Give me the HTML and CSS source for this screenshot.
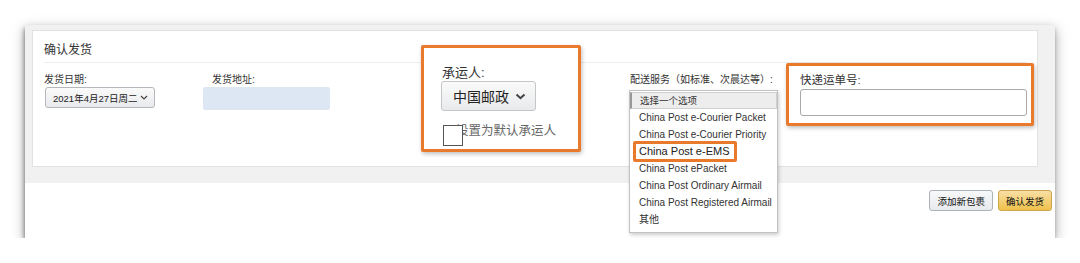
FILE: index.html
```html
<!DOCTYPE html>
<html lang="zh-CN">
<head>
    <meta charset="UTF-8">
    <title>确认发货</title>
    <link rel="stylesheet" href="styles.css">
</head>
<body>
    <div class="window">
        <div class="upper">
            <div class="panel">
                <h2 class="title">确认发货</h2>
                <div class="fields">
                    <div class="field date-field">
                        <label>发货日期:</label>
                        <div class="select date-select">
                            <span>2021年4月27日周二</span>
                            <svg class="chevron" width="8" height="5" viewBox="0 0 8 5"><path d="M1 1 L4 4 L7 1" fill="none" stroke="#444" stroke-width="1.2"/></svg>
                        </div>
                    </div>

                    <div class="field address-field">
                        <label>发货地址:</label>
                        <div class="address-box"></div>
                    </div>

                    <div class="field carrier-field mark">
                        <label>承运人:</label>
                        <div class="select carrier-select">
                            <span>中国邮政</span>
                            <svg class="chevron" width="11" height="7" viewBox="0 0 11 7"><path d="M1.5 1.5 L5.5 5.2 L9.5 1.5" fill="none" stroke="#444" stroke-width="2"/></svg>
                        </div>
                        <div class="default-row">
                            <span class="checkbox"></span>
                            <span class="default-text">设置为默认承运人</span>
                        </div>
                    </div>

                    <div class="field service-field">
                        <label>配送服务（如标准、次晨达等）:</label>
                        <ul class="options">
                            <li class="current">选择一个选项</li>
                            <li>China Post e-Courier Packet</li>
                            <li>China Post e-Courier Priority</li>
                            <li class="picked"><span>China Post e-EMS</span></li>
                            <li>China Post ePacket</li>
                            <li>China Post Ordinary Airmail</li>
                            <li>China Post Registered Airmail</li>
                            <li>其他</li>
                        </ul>
                    </div>

                    <div class="field tracking-field mark">
                        <label>快递运单号:</label>
                        <div class="text-input"></div>
                    </div>
                </div>
            </div>
        </div>
        <div class="footer">
            <button class="btn">添加新包裹</button>
            <button class="btn btn-primary">确认发货</button>
        </div>
    </div>
</body>
</html>
```

FILE: styles.css
```css
body {
    margin: 0;
    background-color: #ffffff;
    font-family: 'Liberation Sans', 'Noto Sans CJK SC', sans-serif;
    color: #333;
}
.window {
    margin: 25px 0 0 25px;
    width: 1030px;
    height: 213px;
    background-color: #fff;
    box-shadow: -1px 3px 4px rgba(0, 0, 0, 0.35), 0 4px 12px rgba(0, 0, 0, 0.35);
}
.upper {
    background-color: #f1f1f1;
    padding: 5px 17px 16px 7px;
}
.panel {
    box-sizing: border-box;
    height: 137px;
    background-color: #fff;
    border: 1px solid #e2e2e2;
    padding: 10px 11px 0 11px;
}
.title {
    margin: 0;
    font-size: 12px;
    font-weight: normal;
    line-height: 18px;
    padding-bottom: 3px;
    border-bottom: 1px solid #eeeeee;
    color: #333;
}
.fields {
    display: flex;
    align-items: flex-start;
    margin-top: 10px;
}
.field {
    flex-shrink: 0;
    box-sizing: border-box;
}
.field label {
    display: block;
    font-size: 10px;
    line-height: 14px;
    color: #333;
}
.select {
    box-sizing: border-box;
    display: flex;
    align-items: center;
    justify-content: space-between;
    white-space: nowrap;
    background: linear-gradient(#fafafa, #e9eaec);
    border: 1px solid #b4b7bc;
    border-radius: 3px;
    color: #222;
}
.date-field {
    width: 159px;
}
.date-select {
    width: 110px;
    height: 21px;
    margin-left: 1px;
    padding: 0 6px 0 7px;
    font-size: 9.5px;
}
.address-field {
    width: 218px;
}
.address-field label {
    padding-left: 9px;
}
.address-box {
    width: 127px;
    height: 23px;
    background-color: #dde7f4;
    border-radius: 2px;
}

/* orange annotation boxes */
.mark {
    position: relative;
    z-index: 2;
    background-color: #fff;
    border: 3px solid #e97a2b;
    border-radius: 2px;
    box-shadow: 1px 2px 4px rgba(0, 0, 0, 0.25);
}
.carrier-field {
    width: 160px;
    height: 107px;
    margin-top: -28px;
    margin-right: 48px;
    padding: 16px 0 0 17px;
}
.carrier-field label {
    font-size: 13px;
    line-height: 17px;
    padding-left: 1px;
    color: #333;
}
.carrier-select {
    width: 95px;
    height: 30px;
    padding: 0 9px 0 11px;
    font-size: 14px;
    border-color: #c4c6ca;
}
.default-row {
    display: flex;
    align-items: flex-start;
    margin-top: 14px;
    padding-left: 2px;
}
.checkbox {
    box-sizing: border-box;
    width: 20px;
    height: 21px;
    border: 1.5px solid #555;
    background-color: #fff;
    position: relative;
    z-index: 1;
}
.default-text {
    margin-left: -7px;
    margin-top: -2px;
    font-size: 12.5px;
    line-height: 16px;
    color: #666;
}

.service-field {
    width: 157px;
    position: relative;
}
.service-field label {
    padding-left: 1px;
}
.options {
    position: absolute;
    top: 17px;
    left: 0;
    z-index: 5;
    box-sizing: border-box;
    width: 149px;
    height: 143px;
    margin: 0;
    padding: 1px 0 0 0;
    list-style: none;
    background-color: #fff;
    border: 1px solid #c2c2c2;
    box-shadow: 1px 2px 4px rgba(0, 0, 0, 0.2);
}
.options li {
    height: 17px;
    line-height: 17px;
    padding-left: 9px;
    font-size: 10px;
    color: #333;
    white-space: nowrap;
}
.options li.current {
    box-sizing: border-box;
    background-color: #ededed;
    border: 1px solid #cfcfcf;
    border-left: 2px solid #999;
    padding-left: 8px;
    line-height: 15px;
    font-size: 9.5px;
}
.options li.picked span {
    display: inline-block;
    box-sizing: border-box;
    height: 21px;
    line-height: 15px;
    margin: -2px 0 0 -6px;
    padding: 0 5px 0 3px;
    border: 3px solid #e97a2b;
    border-radius: 2px;
    font-size: 11px;
    color: #222;
    background-color: #fff;
}

.tracking-field {
    width: 248px;
    height: 63px;
    margin-top: -10px;
    padding: 6px 0 0 11px;
}
.tracking-field label {
    font-size: 11.5px;
    line-height: 16px;
    color: #333;
}
.text-input {
    box-sizing: border-box;
    width: 227px;
    height: 27px;
    margin-top: 1px;
    border: 1px solid #a9a9a9;
    border-radius: 3px;
    background-color: #fff;
}

.footer {
    display: flex;
    justify-content: flex-end;
    gap: 5px;
    padding: 7px 3px 0 0;
}
.btn {
    box-sizing: border-box;
    height: 21px;
    padding: 0 7px;
    font-family: inherit;
    font-size: 9.5px;
    color: #111;
    background: linear-gradient(#f7f8fa, #e7e9ec);
    border: 1px solid #adb1b8;
    border-radius: 3px;
}
.btn-primary {
    background: linear-gradient(#f7dfa5, #f0c14b);
    border-color: #c9a64c;
}
```
